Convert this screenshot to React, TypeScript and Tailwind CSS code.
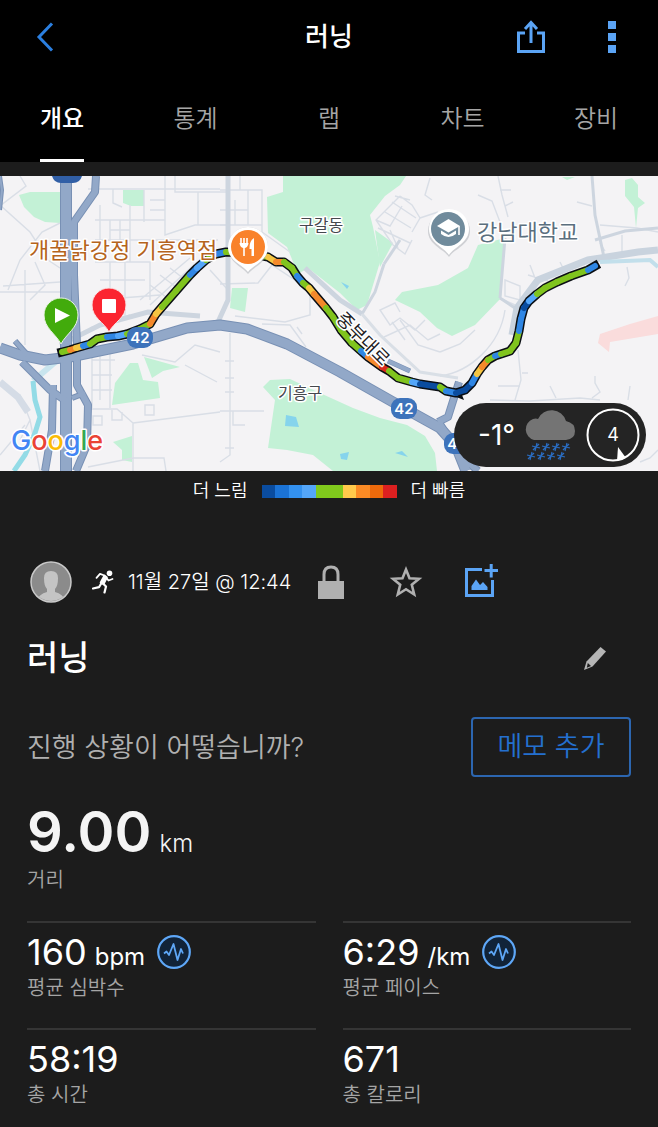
const TABS = ["개요", "통계", "랩", "차트", "장비"]

const LEGEND = [
  "bg-[#0a4c9f]",
  "bg-[#1b73d6]",
  "bg-[#3391f0]",
  "bg-[#54a6f9]",
  "bg-[#80c91c]",
  "bg-[#80c91c]",
  "bg-[#ffca4b]",
  "bg-[#fb8b25]",
  "bg-[#ee6a0b]",
  "bg-[#dc2020]",
]

const STATS = [
  { value: "160", unit: "bpm", label: "평균 심박수", chart: true },
  { value: "6:29", unit: "/km", label: "평균 페이스", chart: true },
  { value: "58:19", unit: "", label: "총 시간", chart: false },
  { value: "671", unit: "", label: "총 칼로리", chart: false },
]

const NAVY = "#0a4c9f"
const BLUE = "#2f86e4"
const SKY = "#54a6f9"
const GREEN = "#80c41e"
const YELLOW = "#f5c542"
const ORANGE = "#f4892b"
const RED = "#d92a1c"

// x, y and the pace colour of the stretch that ends there
const ROUTE: [number, number, string][] = [
  [62, 352, GREEN],
  [70, 350, GREEN],
  [76, 348, ORANGE],
  [83, 346, YELLOW],
  [90, 344, BLUE],
  [97, 339, GREEN],
  [107, 337, GREEN],
  [118, 336, BLUE],
  [127, 334, SKY],
  [140, 329, GREEN],
  [150, 324, GREEN],
  [156, 314, ORANGE],
  [162, 307, YELLOW],
  [176, 291, GREEN],
  [190, 275, GREEN],
  [197, 268, BLUE],
  [206, 260, SKY],
  [216, 254, GREEN],
  [226, 252, BLUE],
  [246, 253, GREEN],
  [268, 257, GREEN],
  [276, 262, YELLOW],
  [284, 262, ORANGE],
  [292, 268, GREEN],
  [297, 276, GREEN],
  [303, 283, BLUE],
  [309, 288, GREEN],
  [314, 294, YELLOW],
  [326, 308, ORANGE],
  [333, 317, GREEN],
  [341, 330, GREEN],
  [352, 343, GREEN],
  [361, 351, GREEN],
  [368, 357, BLUE],
  [382, 367, ORANGE],
  [389, 371, RED],
  [398, 378, GREEN],
  [412, 382, GREEN],
  [420, 384, SKY],
  [440, 387, NAVY],
  [446, 391, GREEN],
  [456, 393, BLUE],
  [465, 390, NAVY],
  [472, 383, NAVY],
  [477, 374, BLUE],
  [482, 367, YELLOW],
  [488, 360, ORANGE],
  [495, 356, GREEN],
  [501, 354, BLUE],
  [510, 351, GREEN],
  [516, 343, GREEN],
  [519, 331, GREEN],
  [521, 319, BLUE],
  [524, 308, BLUE],
  [529, 301, NAVY],
  [537, 294, SKY],
  [545, 288, GREEN],
  [557, 282, GREEN],
  [571, 276, GREEN],
  [588, 270, GREEN],
  [595, 266, BLUE],
]

function Shield({ x, y }: { x: number; y: number }) {
  return (
    <g>
      <rect x={x - 13} y={y - 10} width="26" height="21" rx="9" fill="#3d73bb" />
      <text x={x} y={y + 6} textAnchor="middle" fontSize="15" fontWeight="600" fill="#fff">
        42
      </text>
    </g>
  )
}

function RouteMap() {
  return (
    <svg viewBox="0 176 658 295" className="block w-full" role="img" aria-label="러닝 경로 지도">
      <rect y="176" width="658" height="295" fill="#f4f3f5" />

      {/* parks and water */}
      <g fill="#c3f1d6">
        <path d="M19 195L30 192H60V223L45 222L34 217L24 207Z" />
        <path d="M123 190H144V206H131L123 203Z" />
        <path d="M283 176H406L400 185L385 196L370 215L373 227L380 262L367 305L357 310L340 293L308 268L298 274L287 247L268 233L267 197L283 192Z" />
        <path d="M375 230L393 243L380 267Z" />
        <path d="M505 238L478 245L468 268L438 285L402 292L395 300L420 312L437 328L452 336L475 325L501 298Z" />
        <path d="M562 177H575L567 180Z" />
        <path d="M625 180L632 178L638 185V197L645 203L638 208L636 228L634 207L625 196Z" />
        <path d="M115 383L130 363H138L143 380L158 382L160 398L112 405Z" />
        <path d="M144 357L180 367L163 371L152 378Z" />
        <path d="M113 442L132 436V462L122 460V450Z" />
        <path d="M232 288H248L245 312L230 308Z" />
        <path d="M263 387L270 380L290 379L320 393L353 408L380 418L407 425L425 436L435 453L437 471H333L313 455L287 450L268 448L275 400Z" />
      </g>
      <g fill="#86d4ec">
        <path d="M286 415L296 417L299 427L285 426Z" />
        <path d="M340 454L349 452L347 460L341 459Z" />
        <path d="M395 453L402 451L408 457Z" />
        <path d="M341 282L349 286L347 289Z" />
      </g>
      <path d="M600 334L630 324L658 316V334L610 342L609 352L598 343Z" fill="#fadcdc" />
      <path d="M490 318L500 304L513 310L503 330Z" fill="#f4f3f5" />

      {/* side streets */}
      <g fill="none" stroke="#d9dee6" strokeWidth="1.4">
        <path d="M0 206L26 186L20 176M0 205L30 232L48 260L60 268M60 223L42 232L20 260L8 290M0 292H60M3 286L60 282M25 270V345M35 262L45 285L30 300" />
        <path d="M88 189H220M95 220H165M113 189V203L122 207M144 190V222M95 240H218M165 176V235L195 225H228M175 176V192H228M198 192V225M110 220V240M130 205V262M120 220V258M95 262H150V300M100 280H145M110 262V320M125 262V318M95 300L160 295M140 300L190 258M150 305L197 262" />
        <path d="M150 285L170 300M160 275L180 290M170 268L188 282M90 328L130 315M210 270L228 290M150 200H165M110 230H130M150 210H165M100 205V260" />
        <path d="M220 190H262V232M248 190V225M235 200V225M220 210H248M220 225H262M240 176V190M262 232L290 252M220 284L258 283L272 265L310 290V315L285 322L235 316" />
        <path d="M92 345V408M100 347V400M110 345V408M92 360H115M92 375H112M92 390H112M88 409H117L133 423V471M145 405H154V415H145ZM93 416H102V425H93ZM112 410V420H122V412M133 423L220 412M88 467L133 458H164L166 471M142 355L175 362L195 345L220 352M185 365L217 382" />
        <path d="M230 333V455L220 462M220 411H264M225 361H234M225 378H234M225 392H234M225 448H234M233 411V425H245M262 324L290 325L306 347M297 327L302 334" />
        <path d="M498 176L502 195L508 217M500 190H511M505 206L513 202M478 195L492 201L500 222M600 225L637 228L658 232M577 202L592 206M622 235V253M530 265L535 278M528 275L548 281M560 262L565 272M627 267L629 278L625 286M600 243L605 251" />
        <path d="M505 280L520 286V300L505 296ZM500 298L515 305M440 352L460 344L475 330M440 376C470 372 500 345 505 310M518 350L521 380L515 400M498 386H520M490 400L530 401L580 398L600 400M595 376V383L600 392L592 398M550 386L556 398M630 386L628 400M522 373H528M640 462L650 458L658 450" />
        <path d="M400 196L376 220L393 245L405 254L412 240M376 220L390 226L402 206M385 212L411 228M392 202L416 218M378 228L410 243M400 196L412 205L420 218L412 232M395 196L410 200M420 218L438 212M390 230L398 248M430 178L425 195L432 200" />
        <path d="M400 312L395 303L380 310L390 325L400 318L415 330L425 320M384 337L410 325L428 340L440 334M400 320L418 345L440 352M392 322L405 340M0 385L20 395L30 420L20 440M0 455L25 425M30 420L40 471" />
      </g>
      <g fill="none" stroke="#cdd5df" strokeWidth="4">
        <path d="M228 176V300L218 322" strokeWidth="5" />
        <path d="M95 192V176" />
        <path d="M592 176L595 215L605 262" strokeWidth="3" />
        <path d="M595 240L625 231L658 228" strokeWidth="3" />
        <path d="M384 264L375 292L362 314" strokeWidth="3" />
        <path d="M362 314L340 300L305 268" strokeWidth="5" />
        <path d="M400 240L384 264" strokeWidth="3" />
        <path d="M362 314L380 335L420 372L458 378" strokeWidth="3" stroke="#d9dfe6" />
        <path d="M60 345L100 325L148 312L200 316" strokeWidth="5" />
        <path d="M500 298L515 308M505 238L500 298" strokeWidth="3" />
      </g>
      <path d="M512 335L517 308L538 280L588 260L638 252L658 250" fill="none" stroke="#c9d3de" strokeWidth="7" />
      <path d="M600 262L650 260L658 267" fill="none" stroke="#c2dfeb" strokeWidth="4" />
      <path d="M0 382L18 397L28 412" fill="none" stroke="#d5dce6" strokeWidth="7" />
      <path d="M60 358L33 381" fill="none" stroke="#c9e5ee" strokeWidth="6" />
      <path d="M33 381L35 400L40 417L35 433L25 455L14 471" fill="none" stroke="#93dbe6" strokeWidth="5" />

      {/* highways: darker casing first, fill on top */}
      {["#7890b4", "#92a8c8"].map((color, i) => (
        <g key={color} fill="none" stroke={color} strokeLinejoin="round">
          <path d="M66 176V471" strokeWidth={i ? 10 : 12} />
          <path d="M96 176L95 192L74 222V275L77 345V385L88 405L87 445L76 471" strokeWidth={i ? 6 : 8} />
          <path d="M0 348L20 355L45 360L70 357L133 344L187 328L220 325L247 329L287 344L340 372L393 402L440 428L456 446L466 471" strokeWidth={i ? 9 : 11} />
          <path d="M22 362L50 390L66 401M53 385L52 430L45 471" strokeWidth={i ? 6 : 8} />
          <path d="M459 382L448 417L438 422M440 424L458 453L478 471" strokeWidth={i ? 6 : 8} />
          <path d="M15 341L30 358M72 398L85 393" strokeWidth={i ? 4 : 6} />
          <path d="M0 176L2 190L0 210" strokeWidth={i ? 2 : 4} />
          <path d="M388 361L410 371" strokeWidth={i ? 4 : 5} />
        </g>
      ))}
      <path d="M52 372L58 374L57 382L53 380ZM48 392L53 388M76 405L81 410L79 419L74 417" fill="#f4f3f5" />

      <path d="M52 176H82Q80 183 73 183H61Q54 183 52 176Z" fill="#315fa6" />

      {/* recorded track */}
      <polyline
        points={ROUTE.map(([x, y]) => `${x},${y}`).join(" ")}
        fill="none"
        stroke="#0b0f14"
        strokeWidth="9"
        strokeLinejoin="round"
        strokeLinecap="square"
      />
      <path d="M446 393L464 400L460 390Z" fill="#0b0f14" />
      {ROUTE.slice(1).map(([x, y, color], i) => (
        <line
          key={i}
          x1={ROUTE[i][0]}
          y1={ROUTE[i][1]}
          x2={x}
          y2={y}
          stroke={color}
          strokeWidth="6"
          strokeLinecap="round"
        />
      ))}

      <Shield x={140} y={337} />
      <Shield x={404} y={408} />
      <Shield x={457} y={443} />

      {/* start and finish pins */}
      <path d="M61 344C56 334 44 328 44 315A17 17 0 0 1 78 315C78 328 66 334 61 344Z" fill="#42ab0c" stroke="#e9f3e4" />
      <path d="M55 308V323L70 315.500Z" fill="#fff" />
      <path d="M109 332C104 322 92 318 92 305A17 17 0 0 1 126 305C126 318 114 322 109 332Z" fill="#fb2530" stroke="#f9e6e7" />
      <rect x="102" y="299" width="14" height="14" rx="1" fill="#fff" />

      {/* places */}
      <path d="M248 274C243 267 228 263 228 247A20 20 0 0 1 268 247C268 263 253 267 248 274Z" fill="#a9adb3" opacity=".5" />
      <path d="M248 272C243 265 228 261 228 247A20 20 0 0 1 268 247C268 261 253 265 248 272Z" fill="#fff" />
      <circle cx="248" cy="247" r="17" fill="#f9822b" />
      <path d="M241 238V244M244 238V256M247 238V244" fill="none" stroke="#fff" strokeWidth="1.6" />
      <path d="M239.500 243H248.500Q248 248 244 248Q240 248 239.500 243Z" fill="#fff" />
      <path d="M254 238V256H251.500V249H249.500Q249 241 254 238Z" fill="#fff" />
      <path d="M449 257C444 249 428 245 428 231A21 20 0 0 1 470 231C470 245 454 249 449 257Z" fill="#a9adb3" opacity=".5" />
      <path d="M449 255C444 247 429 243 429 229A20 20 0 0 1 469 229C469 243 454 247 449 255Z" fill="#fff" />
      <circle cx="448" cy="229" r="17" fill="#708b9c" />
      <path d="M437 226L448.500 219L460 226L448.500 232.500Z" fill="#fff" />
      <path d="M441 230.500L448.500 235L456 230.500V234Q448.500 240 441 234Z" fill="#fff" />
      <path d="M459 226V235" stroke="#fff" strokeWidth="1.600" />

      <g stroke="#fff" strokeWidth="3" strokeLinejoin="round" paintOrder="stroke">
        <text x="29" y="258" fontSize="22" fill="#b5641d">
          개꿀닭강정 기흥역점
        </text>
        <text x="477" y="240" fontSize="22" fill="#5b6f7e">
          강남대학교
        </text>
        <text x="299" y="231" fontSize="16" fill="#45484d">
          구갈동
        </text>
        <text x="278" y="399" fontSize="16" fill="#45484d">
          기흥구
        </text>
        <text transform="translate(363 339) rotate(45)" y="6" textAnchor="middle" fontSize="18" fill="#1d2024">
          중부대로
        </text>
        <text x="11" y="450" fontSize="27" fontWeight="500">
          <tspan fill="#4285f4">G</tspan>
          <tspan fill="#ea4335">o</tspan>
          <tspan fill="#fbbc05">o</tspan>
          <tspan fill="#4285f4">g</tspan>
          <tspan fill="#34a853">l</tspan>
          <tspan fill="#ea4335">e</tspan>
        </text>
      </g>
    </svg>
  )
}

function Snowflakes() {
  const flakes = [
    [14, 39],
    [24, 39],
    [34, 39],
    [44, 39],
    [9, 48],
    [19, 48],
    [29, 48],
    [39, 48],
  ]
  return (
    <g stroke="#2a6cc0" strokeWidth="1.200">
      {flakes.map(([x, y]) => (
        <path key={`${x}-${y}`} d={`M${x + 1} ${y - 4}L${x - 1} ${y + 4}M${x - 4} ${y - 1}L${x + 4} ${y + 1}M${x - 3} ${y + 3}L${x + 3} ${y - 3}`} />
      ))}
    </g>
  )
}

function Weather() {
  return (
    <div className="absolute right-3 bottom-1 flex h-16 w-48 items-center rounded-full bg-[#242424] pl-6 text-white">
      <span className="w-11 text-[28px] leading-8">-1°</span>
      <svg viewBox="0 0 54 54" className="h-[54px] w-[54px]" aria-hidden="true">
        <path d="M12 32A11 11 0 0 1 11 11Q14 10 16 11A15 15 0 0 1 44 13Q53 15 53 23Q53 31 44 32Z" fill="#747474" />
        <Snowflakes />
      </svg>
      <div className="relative ml-2.5 flex h-[54px] w-[54px] items-center justify-center">
        <svg viewBox="0 0 54 54" className="absolute inset-0" aria-hidden="true">
          <circle cx="27" cy="27" r="25.500" fill="none" stroke="#fff" strokeWidth="2" />
          <path d="M32 39L40 50L31 53Z" fill="#fff" />
        </svg>
        <span className="text-lg">4</span>
      </div>
    </div>
  )
}

function ChartButton({ label }: { label: string }) {
  return (
    <button type="button" aria-label={`${label} 차트`} className="ml-3">
      <svg viewBox="0 0 34 34" className="h-[34px] w-[34px]" fill="none" stroke="#5ea7f7">
        <circle cx="17" cy="17" r="15.800" strokeWidth="2.200" fill="#112338" />
        <path d="M7 18.500L9.500 16.500L12 20L16.500 9L20.500 25L24 14L26 18.500" strokeWidth="1.800" strokeLinejoin="round" />
      </svg>
    </button>
  )
}

export default function App() {
  return (
    <div className="min-h-screen bg-[#1c1c1c] pb-4 font-[Inter,'Noto_Sans_CJK_KR',sans-serif] text-white">
      <header className="bg-black">
        <div className="flex h-[74px] items-center px-9">
          <div className="flex flex-1">
            <button type="button" aria-label="뒤로">
              <svg viewBox="0 0 18 30" className="h-[30px] w-[18px]" fill="none" stroke="#2b7fe0" strokeWidth="3">
                <path d="M16 1.500L3 15L16 28.500" />
              </svg>
            </button>
          </div>
          <h1 className="text-[26px] leading-8 font-medium">러닝</h1>
          <div className="flex flex-1 items-center justify-end">
            <button type="button" aria-label="공유" className="mr-[57px]">
              <svg viewBox="0 0 28 34" className="h-[34px] w-7" fill="none" stroke="#5ba4f5" strokeWidth="3">
                <path d="M8 13H1.500V31.500H26.500V13H20" />
                <path d="M14 23V3M8 9L14 2.500L20 9" />
              </svg>
            </button>
            <button type="button" aria-label="더보기" className="px-1.5">
              <svg viewBox="0 0 8 32" className="h-8 w-2" fill="#5ba4f5">
                <rect width="8" height="8" y="0" />
                <rect width="8" height="8" y="12" />
                <rect width="8" height="8" y="24" />
              </svg>
            </button>
          </div>
        </div>
        <nav className="flex h-[88px] justify-between px-10">
          {TABS.map((tab, i) => (
            <button
              key={tab}
              type="button"
              className={
                i === 0
                  ? "w-11 border-b-3 border-white pt-1 text-2xl font-medium whitespace-nowrap"
                  : "w-11 border-b-3 border-transparent pt-1 text-2xl font-[350] whitespace-nowrap text-[#a6a6a6]"
              }
            >
              {tab}
            </button>
          ))}
        </nav>
      </header>

      <main>
        <section className="relative mt-3.5">
          <RouteMap />
          <Weather />
        </section>

        <div className="flex h-10 items-center justify-center gap-3.5 text-lg font-[350]">
          <span>더 느림</span>
          <div className="flex h-[13px] w-[135px]">
            {LEGEND.map((color, i) => (
              <span key={i} className={`flex-1 ${color}`} />
            ))}
          </div>
          <span>더 빠름</span>
        </div>

        <section className="mt-[50px] flex h-[42px] items-center px-[30px]">
          <svg viewBox="0 0 42 42" className="h-[42px] w-[42px]" aria-hidden="true">
            <clipPath id="avatar">
              <circle cx="21" cy="21" r="19" />
            </clipPath>
            <circle cx="21" cy="21" r="20" fill="#8b8b8b" stroke="#c9c9c9" strokeWidth="1.500" />
            <g clipPath="url(#avatar)" fill="#c4c4c4">
              <path d="M14 17Q14 10 21 10Q28 10 28 17Q28 25 25 28V31Q34 33 36 42H6Q8 33 17 31V28Q14 25 14 17Z" />
            </g>
          </svg>
          <svg viewBox="0 0 22 24" className="ml-5 h-6 w-[22px]" fill="none" stroke="#fff" strokeLinejoin="round" strokeLinecap="round" aria-hidden="true">
            <circle cx="17.500" cy="3.200" r="2.800" fill="#fff" stroke="none" />
            <path d="M12.500 6L14.500 7.500L11.500 13.500L9 12.500Z" fill="#fff" strokeWidth="2.600" />
            <path d="M12.500 5.500L8 3.800L4.500 7.800M14.500 8L16.500 10.500L20.500 9" strokeWidth="1.800" />
            <path d="M9.500 13L7 17.200L1 18.500M11 13.500L14 16.500L12.500 22.500" strokeWidth="2.200" />
          </svg>
          <time dateTime="11-27T12:44" className="ml-3.5 text-xl font-[350]">
            11월 27일 @ 12:44
          </time>
          <button type="button" aria-label="공개 설정" className="ml-[26px]">
            <svg viewBox="0 0 28 36" className="h-9 w-7">
              <path d="M7 18V10.500Q7 3 14 3Q21 3 21 10.500V18" fill="none" stroke="#b0b0b0" strokeWidth="3" />
              <path d="M1 17H27V35H1Z" fill="#b0b0b0" />
            </svg>
          </button>
          <button type="button" aria-label="즐겨찾기" className="ml-11">
            <svg viewBox="0 0 34 34" className="h-[34px] w-[34px]" fill="none" stroke="#b0b0b0" strokeWidth="2.600">
              <path d="M17 4.500L20.500 13.200L30 13.800L22.800 19.800L25.200 29.500L17 24.200L8.800 29.500L11.200 19.800L4 13.800L13.500 13.200Z" />
            </svg>
          </button>
          <button type="button" aria-label="사진 추가" className="ml-10">
            <svg viewBox="0 0 36 36" className="h-9 w-9" fill="none" stroke="#5ba4f5" strokeWidth="3">
              <path d="M19 5.500H3.500V31.500H29.500V16" />
              <path d="M21.500 6.500H35M28.200 0V13.500" />
              <path d="M8.500 26V22L13 15.500L17 21L20 18L24.500 23V26Z" fill="#5ba4f5" stroke="none" />
            </svg>
          </button>
        </section>

        <div className="px-[27px]">
          <div className="mt-[30px] flex h-[50px] items-center justify-between pr-6">
            <h2 className="text-[34px] leading-10 font-medium">러닝</h2>
            <button type="button" aria-label="이름 편집">
              <svg viewBox="0 0 24 26" className="h-[26px] w-6">
                <path d="M17.500 2L23 6.500L9.500 21.500L1 25L3.500 16.500Z" fill="#b5b5b5" />
                <path d="M4.800 18L8 21L3.800 22.800Z" fill="#1c1c1c" />
              </svg>
            </button>
          </div>

          <div className="mt-[34px] flex items-center justify-between">
            <p className="pt-0.5 text-[27px] leading-9 font-[350] text-[#b0b0b0]">진행 상황이 어떻습니까?</p>
            <button
              type="button"
              className="h-[60px] w-40 rounded-sm border-2 border-[#2c66b0] text-[27px] font-[350] text-[#2470cf]"
            >
              메모 추가
            </button>
          </div>

          <div className="mt-[26px]">
            <p className="flex items-baseline gap-2 text-[56px] leading-[58px] font-semibold text-[#f4f4f4]">
              9.00
              <span className="text-2xl font-[350]">km</span>
            </p>
            <p className="mt-[5px] text-xl leading-7 font-[350] text-[#a5a5a5]">거리</p>
          </div>

          <div className="mt-[27px] grid grid-cols-2 gap-x-[27px] gap-y-[26px]">
            {STATS.map((stat) => (
              <div key={stat.label} className="border-t-2 border-[#353535] pt-[7px]">
                <div className="flex h-11 items-center">
                  <p className="text-[36px] leading-[44px]">
                    {stat.value}
                    {stat.unit && <span className="ml-2 text-2xl">{stat.unit}</span>}
                  </p>
                  {stat.chart && <ChartButton label={stat.label} />}
                </div>
                <p className="text-xl leading-7 font-[350] text-[#a5a5a5]">{stat.label}</p>
              </div>
            ))}
          </div>
        </div>
      </main>
    </div>
  )
}
